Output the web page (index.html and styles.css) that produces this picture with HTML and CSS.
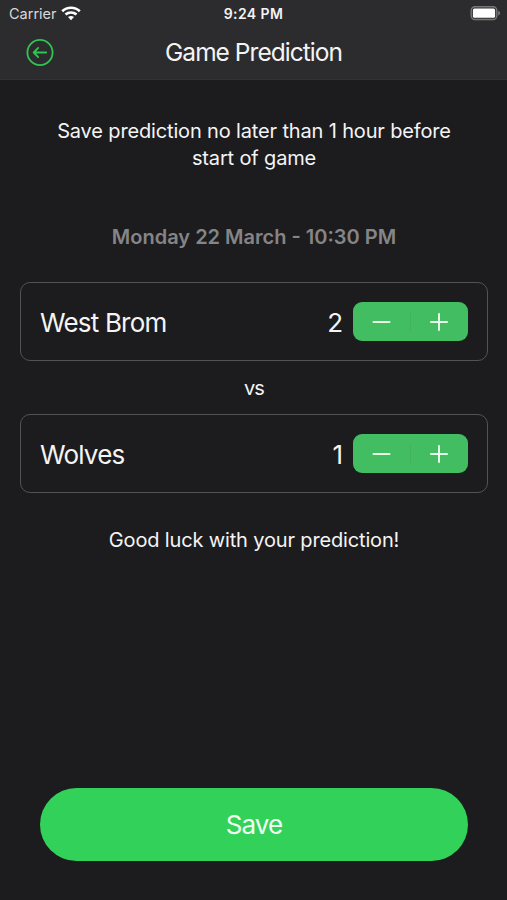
FILE: index.html
```html
<!DOCTYPE html>
<html lang="en">
<head>
<meta charset="utf-8">
<title>Game Prediction</title>
<link rel="stylesheet" href="styles.css">
</head>
<body>
<div class="screen">
  <header class="header">
    <div class="status">
      <div class="carrier">
        <span class="carrier-name">Carrier</span>
        <svg class="wifi" width="20" height="15" viewBox="0 0 20 15" fill="none" stroke="#fff" stroke-width="2.7">
          <path d="M1.2 5.2C6 .6 14 .6 18.8 5.2"/>
          <path d="M4.5 8.6c3-2.8 8-2.8 11 0"/>
          <path d="M7 11.1c1.7-1.6 4.3-1.6 6 0l-3 3.1z" fill="#fff" stroke="none"/>
        </svg>
      </div>
      <span class="time">9:24 PM</span>
      <svg class="battery" width="32" height="16" viewBox="0 0 32 16">
        <rect x="1.2" y="1.7" width="25.6" height="12.8" rx="3.8" fill="none" stroke="#77777a" stroke-width="1.4"/>
        <rect x="2.9" y="3.4" width="22.2" height="9.4" rx="1.6" fill="#fff"/>
        <path d="M28.2 5.7c2.6 1 2.6 3.8 0 4.8z" fill="#77777a"/>
      </svg>
    </div>
    <div class="nav">
      <svg class="back" width="28" height="28" viewBox="0 0 28 28" fill="none" stroke="#30c452" stroke-width="1.8" stroke-linecap="round" stroke-linejoin="round">
        <circle cx="14" cy="13.5" r="12.6"/>
        <path d="M20.2 13.5H8M12.2 8.9 7.7 13.5l4.5 4.6"/>
      </svg>
      <h1 class="title">Game Prediction</h1>
    </div>
  </header>
  <main class="content">
    <p class="note">Save prediction no later than 1 hour before<br>start of game</p>
    <p class="date">Monday 22 March - 10:30 PM</p>
    <section class="team">
      <span class="name">West Brom</span>
      <span class="score">2</span>
      <div class="stepper">
        <svg width="57" height="39" viewBox="0 0 57 39"><path d="M20.5 20h16"/></svg>
        <i class="divider"></i>
        <svg width="57" height="39" viewBox="0 0 57 39"><path d="M20 20h16M28 12v16"/></svg>
      </div>
    </section>
    <p class="vs">vs</p>
    <section class="team">
      <span class="name">Wolves</span>
      <span class="score">1</span>
      <div class="stepper">
        <svg width="57" height="39" viewBox="0 0 57 39"><path d="M20.5 20h16"/></svg>
        <i class="divider"></i>
        <svg width="57" height="39" viewBox="0 0 57 39"><path d="M20 20h16M28 12v16"/></svg>
      </div>
    </section>
    <p class="luck">Good luck with your prediction!</p>
    <button class="save">Save</button>
  </main>
</div>
</body>
</html>
```

FILE: styles.css
```css
* { box-sizing: border-box; }
body {
  margin: 0;
  background: #1c1c1e;
  color: #f4f4f5;
  font-family: Inter, "Liberation Sans", sans-serif;
}
h1, p { margin: 0; font-weight: 400; }
svg { display: block; }
.screen { width: 507px; height: 900px; display: flex; flex-direction: column; }
.header { height: 80px; background: #2c2c2e; border-bottom: 1px solid #323234; }
.status {
  height: 27px;
  display: grid;
  grid-template-columns: 1fr auto 1fr;
  align-items: center;
  padding: 0 5px 0 9px;
}
.carrier { display: flex; align-items: center; gap: 4px; }
.carrier-name { font-size: 14.5px; color: #d8d8da; }
.wifi { margin-top: -1px; }
.time { margin: 0 2px 0 -2px; font-size: 14px; font-weight: 600; letter-spacing: 0.4px; }
.battery { justify-self: end; margin-top: -1px; }
.nav {
  height: 52px;
  display: grid;
  grid-template-columns: 28px 1fr 28px;
  align-items: center;
  padding: 0 26px;
}
.title { text-align: center; font-size: 24.5px; line-height: 50px; padding-bottom: 2px; letter-spacing: -0.97px; }
.content { flex: 1; display: flex; flex-direction: column; padding: 38px 19px 39px 20px; }
.note { text-align: center; font-size: 20px; line-height: 27px; letter-spacing: -0.15px; }
.date {
  margin-top: 52px;
  text-align: center;
  font-size: 20px;
  font-weight: 600;
  line-height: 27px;
  color: #858587;
}
.team {
  height: 79px;
  display: flex;
  align-items: center;
  padding: 0 19px 0 20px;
  border: 1px solid #525254;
  border-radius: 10px;
}
.date + .team { margin-top: 31px; }
.name { flex: 1; margin-left: -1px; padding-top: 2px; font-size: 26px; letter-spacing: -0.82px; }
.score { padding-top: 2px; font-size: 26px; margin-right: 10px; }
.stepper {
  width: 115px;
  height: 39px;
  display: flex;
  align-items: center;
  background: #43bd62;
  border-radius: 9px;
}
.stepper svg { fill: none; stroke: #e6ffe9; stroke-width: 2; stroke-linecap: round; }
.divider { width: 1px; height: 18px; background: #42b25f; }
.vs { height: 53px; padding-top: 2px; text-align: center; font-size: 20px; line-height: 51px; letter-spacing: -0.8px; }
.luck { margin-top: 34px; text-align: center; font-size: 20px; line-height: 27px; letter-spacing: -0.15px; }
.save {
  height: 73px;
  margin: auto 20px 0;
  border: 0;
  border-radius: 37px;
  background: #32d25a;
  color: #f0fff2;
  font-family: inherit;
  font-size: 26px;
  letter-spacing: -0.9px;
}
```
